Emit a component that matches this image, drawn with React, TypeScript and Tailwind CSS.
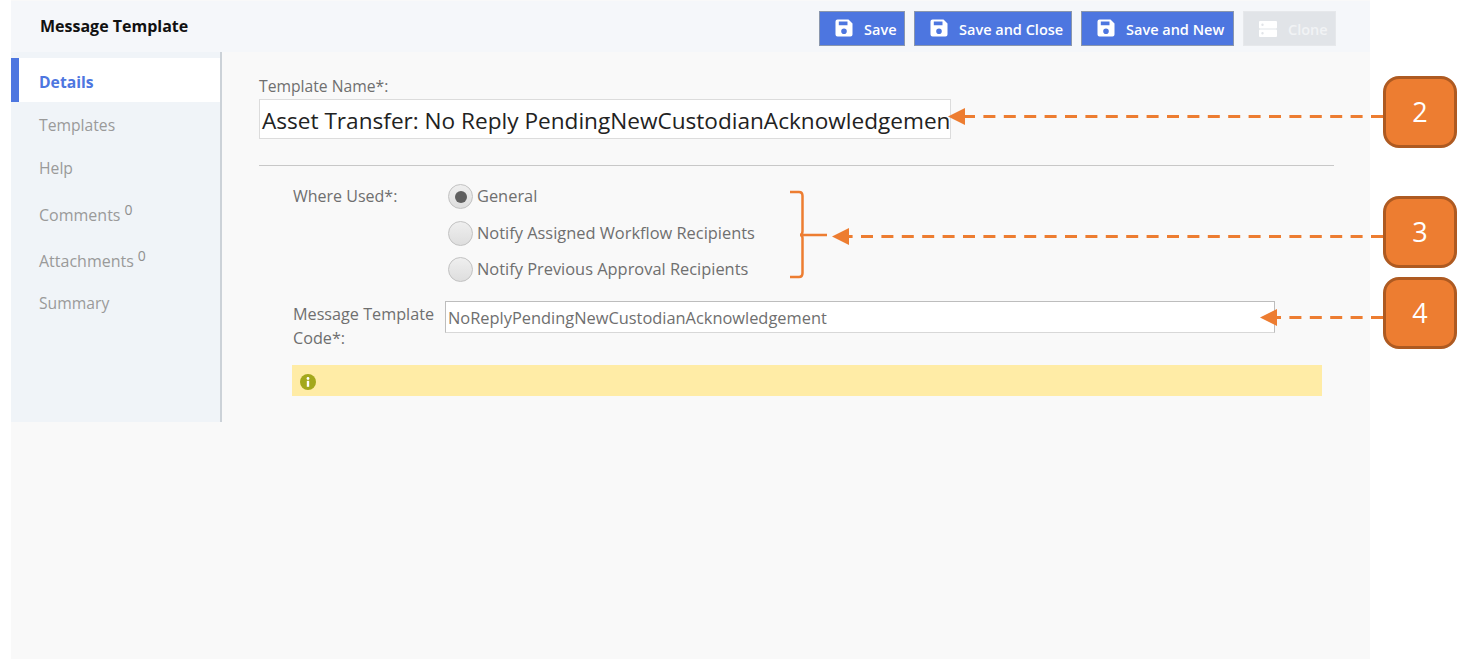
import React from "react";

const font = { fontFamily: '"Open Sans", "Noto Sans", sans-serif' };

function SaveIcon() {
  return (
    <svg width="18" height="18" viewBox="0 0 18 18" className="shrink-0">
      <path
        fillRule="evenodd"
        fill="#fff"
        d="M2.500 0.500H13.500L17.500 4.500V15.500a2 2 0 0 1-2 2H2.500a2 2 0 0 1-2-2V2.500a2 2 0 0 1 2-2ZM3.800 2.500V6.200H12.500V2.500ZM9 9.500a2.800 2.800 0 1 0 0 5.600a2.800 2.800 0 1 0 0-5.600Z"
      />
    </svg>
  );
}

function CloneIcon() {
  return (
    <svg width="18" height="16" viewBox="0 0 18 16" className="shrink-0">
      <path
        fillRule="evenodd"
        fill="#fff"
        d="M1 0H17a1 1 0 0 1 1 1V6.500a1 1 0 0 1-1 1H1a1 1 0 0 1-1-1V1a1 1 0 0 1 1-1ZM3.500 2.500a1.200 1.200 0 1 0 0 2.400a1.200 1.200 0 1 0 0-2.400ZM1 8.500H17a1 1 0 0 1 1 1V15a1 1 0 0 1-1 1H1a1 1 0 0 1-1-1V9.500a1 1 0 0 1 1-1ZM3.500 11a1.200 1.200 0 1 0 0 2.400a1.200 1.200 0 1 0 0-2.400Z"
      />
    </svg>
  );
}

function ActionButton({ label, width }: { label: string; width: string }) {
  return (
    <button
      className={`flex h-[35px] items-center gap-[11px] border border-[#8a97ad] bg-[#4d76e0] pb-[2px] pl-[15px] text-[14.500px] font-semibold text-white ${width}`}
    >
      <SaveIcon />
      <span className="mt-[4px] whitespace-nowrap">{label}</span>
    </button>
  );
}

function Radio({ label, checked, height }: { label: string; checked?: boolean; height: string }) {
  return (
    <div className={`flex items-center ${height}`}>
      <span className="flex h-[25px] w-[25px] items-center justify-center rounded-full border border-[#c2c2c2] bg-gradient-to-b from-[#efefef] to-[#dedede]">
        {checked && <span className="h-[12px] w-[12px] rounded-full bg-[#5f5f5f]" />}
      </span>
      <span className="ml-[4px] whitespace-nowrap text-[16.400px] text-[#6f6f6f]">{label}</span>
    </div>
  );
}

function NavItem({ label, count, height }: { label: string; count?: boolean; height: string }) {
  return (
    <div className={`flex items-center pl-[28px] text-[#9a9a9a] ${count ? "text-[16px]" : "text-[15.700px]"} ${height}`}>
      <span>{label}</span>
      {count && <span className="relative -top-[5px] ml-[4px] text-[14px] leading-none text-[#8f8f8f]">0</span>}
    </div>
  );
}

function Badge({ n, top }: { n: number; top: string }) {
  return (
    <div
      className={`absolute left-[1383px] flex h-[72px] w-[74px] items-center justify-center rounded-[16px] border-[3px] border-[#ae5a21] bg-[#ed7d31] text-[27px] text-white ${top}`}
    >
      {n}
    </div>
  );
}

function Annotations() {
  return (
    <svg
      width="1467"
      height="659"
      viewBox="0 0 1467 659"
      className="pointer-events-none absolute left-0 top-0"
    >
      <g stroke="#ed7d31" strokeWidth="3" strokeDasharray="12 8.400" fill="none">
        <path d="M1383 116.500H962" />
        <path d="M1383 236.500H846" />
        <path d="M1383 317.500H1274" />
      </g>
      <g fill="#ed7d31">
        <path d="M948 116.500L965 108V125Z" />
        <path d="M832 236.500L849 228V245Z" />
        <path d="M1260 317.500L1277 309V326Z" />
      </g>
      <path
        d="M790 192H799Q802.500 192 802.500 196V231Q802.500 235 800 235H827M800 235Q802.500 235 802.500 238V273Q802.500 277 799 277H790"
        fill="none"
        stroke="#ed7d31"
        strokeWidth="2.500"
      />
    </svg>
  );
}

export default function App() {
  return (
    <div className="relative h-[659px] w-[1467px] overflow-hidden bg-white" style={font}>
      <div className="ml-[11px] flex h-[659px] w-[1359px] flex-col bg-[#f9f9f9]">
        <header className="mt-px flex h-[51px] shrink-0 items-start bg-[#f5f7fa]">
          <h1 className="ml-[29px] mt-[14px] text-[16px] font-bold leading-[22px] text-[#111]">Message Template</h1>
          <div className="ml-auto mr-[34px] mt-[10px] flex gap-[9px]">
            <ActionButton label="Save" width="w-[86px]" />
            <ActionButton label="Save and Close" width="w-[158px]" />
            <ActionButton label="Save and New" width="w-[153px]" />
            <button className="flex h-[35px] w-[93px] items-center gap-[11px] border border-[#e6e8eb] bg-[#e1e4e8] pl-[15px] text-[14.500px] font-semibold text-[#f1f3f5]">
              <CloneIcon />
              <span className="mt-[2px]">Clone</span>
            </button>
          </div>
        </header>

        <div className="flex flex-1 items-start">
          <aside className="h-[370px] w-[211px] shrink-0 border-r-2 border-[#ccd2d8] bg-[#f0f4f8] pt-[6px]">
            <div className="flex h-[44px] items-center border-l-[8px] border-[#4d76e0] bg-white pl-[20px] pt-[6px] text-[15.700px] font-bold text-[#4d76e0]">
              Details
            </div>
            <div className="h-[2px]" />
            <NavItem label="Templates" height="h-[44px]" />
            <NavItem label="Help" height="h-[42px]" />
            <NavItem label="Comments" count height="h-[50px]" />
            <NavItem label="Attachments" count height="h-[42px]" />
            <NavItem label="Summary" height="h-[44px]" />
          </aside>

          <main className="ml-[37px] w-[1075px] pt-[23px]">
            <label className="block text-[15.700px] leading-[22px] text-[#6f6f6f]">Template Name*:</label>
            <div className="mt-[2px] flex h-[40px] w-[692px] items-center overflow-hidden whitespace-nowrap border border-[#dcdcdc] bg-white pl-[2px] pt-[4px] text-[22.600px] text-[#222]">
              Asset Transfer: No Reply PendingNewCustodianAcknowledgemen
            </div>
            <div className="mt-[26px] h-px bg-[#c8c8c8]" />

            <div className="ml-[34px] mt-[12px] flex">
              <div className="w-[155px] pt-[7px] text-[16px] leading-[22px] text-[#6f6f6f]">Where Used*:</div>
              <div className="flex flex-col">
                <Radio label="General" checked height="h-[37px]" />
                <Radio label="Notify Assigned Workflow Recipients" height="h-[37px]" />
                <Radio label="Notify Previous Approval Recipients" height="h-[35.500px]" />
              </div>
            </div>

            <div className="ml-[34px] mt-[13px] flex items-start">
              <div className="w-[152px] pt-[1px] text-[16.200px] leading-[24.500px] text-[#6f6f6f]">
                Message Template Code*:
              </div>
              <div className="flex h-[32px] w-[830px] items-center border border-[#bdbdbd] border-b-[#d8d8d8] bg-white pl-[2px] pt-[3px] text-[16.400px] text-[#6f6f6f]">
                NoReplyPendingNewCustodianAcknowledgement
              </div>
            </div>

            <div className="ml-[33px] mt-[14px] flex h-[31px] w-[1030px] items-center bg-[#ffeca6] pl-[8px] pt-[4px]">
              <svg width="16" height="16" viewBox="0 0 16 16">
                <circle cx="8" cy="8" r="8" fill="#a3a81c" />
                <circle cx="8" cy="4.500" r="1.400" fill="#fff" />
                <rect x="6.800" y="6.800" width="2.400" height="6" fill="#fff" />
              </svg>
            </div>
          </main>
        </div>
      </div>

      <Annotations />
      <Badge n={2} top="top-[76px]" />
      <Badge n={3} top="top-[196px]" />
      <Badge n={4} top="top-[277px]" />
    </div>
  );
}
